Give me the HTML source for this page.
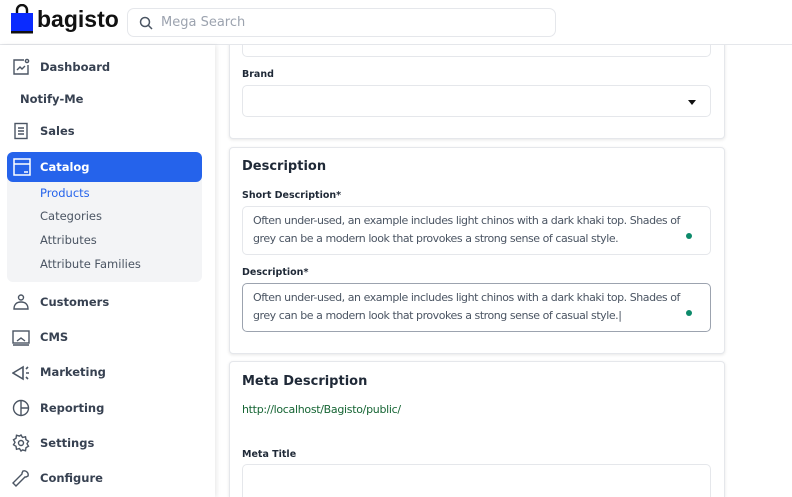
<!DOCTYPE html>
<html><head><meta charset="utf-8"><style>
*{box-sizing:border-box;margin:0;padding:0}
html{width:792px;height:497px;overflow:hidden}
body{width:792px;height:497px;overflow:hidden;background:#f3f4f6;font-family:"DejaVu Sans","Liberation Sans",sans-serif;color:#1f2937;position:relative}
.hdr{position:absolute;left:0;top:0;width:792px;height:45px;background:#fff;border-bottom:1px solid #e5e7eb}
.logo{position:absolute;left:37px;top:6px;font:bold 23px "Liberation Sans",sans-serif;color:#111;letter-spacing:0}
.search{position:absolute;left:127px;top:8px;width:429px;height:29px;border:1px solid #e5e7eb;border-radius:7px;font-size:13px;color:#9ca3af;padding:6px 0 0 33px}
.side{position:absolute;left:0;top:45px;width:215px;height:452px;background:#fff;box-shadow:2px 0 4px rgba(0,0,0,.08)}
.it{position:absolute;left:40px;font-weight:bold;font-size:11.5px;color:#374151}
.ic{position:absolute;left:12px}
.sub{position:absolute;left:40px;font-size:11.5px;color:#4b5563}
.main{position:absolute;left:215px;top:45px;width:577px;height:452px;background:#fff}
.card{position:absolute;left:229px;width:496px;background:#fff;border:1px solid #e5e7eb;border-radius:4px;box-shadow:0 1px 3px rgba(0,0,0,.1)}
.lbl{position:absolute;left:242px;font-size:9.5px;font-weight:bold;color:#1f2937}
.inp{position:absolute;left:242px;width:469px;border:1px solid #e5e7eb;border-radius:5px;background:#fff}
.ttl{position:absolute;left:242px;font-size:13px;font-weight:bold;color:#1f2937}
.ta{font-size:11px;color:#4b5563;line-height:17.5px;padding:5px 0 0 10px;letter-spacing:-.45px;white-space:nowrap}
.dot{position:absolute;right:18px;top:26px;width:6px;height:6px;border-radius:50%;background:#0d8a6a}
</style></head><body>
<div class="main"></div>
<div class="card" style="top:20px;height:119px"></div>
<div class="inp" style="top:30px;height:27px;border-top:none"></div>
<div class="lbl" style="top:69px">Brand</div>
<div class="inp" style="top:85px;height:32px"><div style="position:absolute;right:14px;top:14px;border:4px solid transparent;border-top:5px solid #111"></div></div>
<div class="card" style="top:147px;height:207px"></div>
<div class="ttl" style="top:159px">Description</div>
<div class="lbl" style="top:190px">Short Description*</div>
<div class="inp ta" style="top:206px;height:49px">Often under-used, an example includes light chinos with a dark khaki top. Shades of<br>grey can be a modern look that provokes a strong sense of casual style.<div class="dot"></div></div>
<div class="lbl" style="top:267px">Description*</div>
<div class="inp ta" style="top:283px;height:49px;border-color:#9ca3af">Often under-used, an example includes light chinos with a dark khaki top. Shades of<br>grey can be a modern look that provokes a strong sense of casual style.|<div class="dot"></div></div>
<div class="card" style="top:361px;height:136px;border-bottom:none;border-radius:4px 4px 0 0"></div>
<div class="ttl" style="top:374px">Meta Description</div>
<div style="position:absolute;left:242px;top:403px;font-size:11px;color:#166534;letter-spacing:-.3px">http://localhost/Bagisto/public/</div>
<div class="lbl" style="top:449px">Meta Title</div>
<div class="inp" style="top:464px;height:33px;border-bottom:none;border-radius:5px 5px 0 0"></div>

<div class="hdr">
<svg style="position:absolute;left:10px;top:4px" width="24" height="30" viewBox="0 0 24 30"><path d="M7 10V6a5 5 0 0 1 10 0v4" fill="none" stroke="#111" stroke-width="2.4"/><rect x="1" y="9" width="22" height="20" fill="#0a2bff"/><rect x="1" y="27" width="22" height="2.5" fill="#111"/></svg>
<div class="logo">bagisto</div>
<div class="search"><svg style="position:absolute;left:11px;top:7px" width="14" height="14" viewBox="0 0 14 14"><circle cx="6" cy="6" r="4.5" fill="none" stroke="#4b5563" stroke-width="1.5"/><path d="M9.5 9.5L13 13" stroke="#4b5563" stroke-width="1.5"/></svg>Mega Search</div>
</div>

<div class="side">
<svg class="ic" style="top:13px" width="18" height="18" viewBox="0 0 18 18" fill="none" stroke="#4b5563" stroke-width="1.4"><path d="M12 2H2v14h14V7"/><path d="M5 12l3-3 2 2 3-3"/><circle cx="15" cy="3" r="1.6"/></svg>
<div class="it" style="top:15px">Dashboard</div>
<div class="it" style="top:47px;left:20px">Notify-Me</div>
<svg class="ic" style="top:77px" width="18" height="18" viewBox="0 0 18 18" fill="none" stroke="#4b5563" stroke-width="1.4"><rect x="3" y="1.5" width="12" height="15"/><path d="M6 6h6M6 9h6M6 12h6"/></svg>
<div class="it" style="top:79px">Sales</div>
<div style="position:absolute;left:7px;top:107px;width:195px;height:130px;background:#f3f4f6;border-radius:6px"></div>
<div style="position:absolute;left:7px;top:107px;width:195px;height:30px;background:#2563eb;border-radius:6px"></div>
<svg class="ic" style="top:113px;left:13px" width="18" height="18" viewBox="0 0 18 18" fill="none" stroke="#fff" stroke-width="1.5"><rect x="1" y="1" width="16" height="16"/><path d="M1 6h16M12 13v2M14 13v2"/></svg>
<div class="it" style="top:115px;color:#fff">Catalog</div>
<div class="sub" style="top:141px;color:#2563eb">Products</div>
<div class="sub" style="top:164px">Categories</div>
<div class="sub" style="top:188px">Attributes</div>
<div class="sub" style="top:212px">Attribute Families</div>
<svg class="ic" style="top:248px" width="18" height="18" viewBox="0 0 18 18" fill="none" stroke="#4b5563" stroke-width="1.4"><circle cx="9" cy="4.5" r="2.5"/><path d="M2 16c0-5 3-7 7-7s7 2 7 7z"/></svg>
<div class="it" style="top:250px">Customers</div>
<svg class="ic" style="top:284px" width="18" height="18" viewBox="0 0 18 18" fill="none" stroke="#4b5563" stroke-width="1.4"><rect x="1" y="2" width="16" height="12"/><path d="M5 12l4-3 4 3M1 16h16"/></svg>
<div class="it" style="top:285px">CMS</div>
<svg class="ic" style="top:319px" width="18" height="18" viewBox="0 0 18 18" fill="none" stroke="#4b5563" stroke-width="1.6"><path d="M1 9l10-6v12z"/><path d="M14 5l2-2M14 9h3M14 13l2 2"/></svg>
<div class="it" style="top:320px">Marketing</div>
<svg class="ic" style="top:354px" width="18" height="18" viewBox="0 0 18 18" fill="none" stroke="#4b5563" stroke-width="1.4"><circle cx="9" cy="9" r="7.5"/><path d="M9 1.5V16.5M9 9h7.5"/></svg>
<div class="it" style="top:356px">Reporting</div>
<svg class="ic" style="top:389px" width="18" height="18" viewBox="0 0 18 18" fill="none" stroke="#4b5563" stroke-width="1.4"><path d="M9 1l1.5 2.5 3-.8.5 3 2.5 1.5-1.5 2.5 1.5 2.5-2.5 1.5-.5 3-3-.8L9 17l-1.5-2.5-3 .8-.5-3L1.5 10.8 3 8.3 1.5 5.8 4 4.3l.5-3 3 .8z"/><circle cx="9" cy="9" r="2.5"/></svg>
<div class="it" style="top:391px">Settings</div>
<svg class="ic" style="top:424px" width="18" height="18" viewBox="0 0 18 18" fill="none" stroke="#4b5563" stroke-width="1.4"><path d="M11 2a4 4 0 0 1 5 5l-2 1-1 0-9 9-3-3 9-9 0-1z"/></svg>
<div class="it" style="top:426px">Configure</div>
</div>
</body></html>
